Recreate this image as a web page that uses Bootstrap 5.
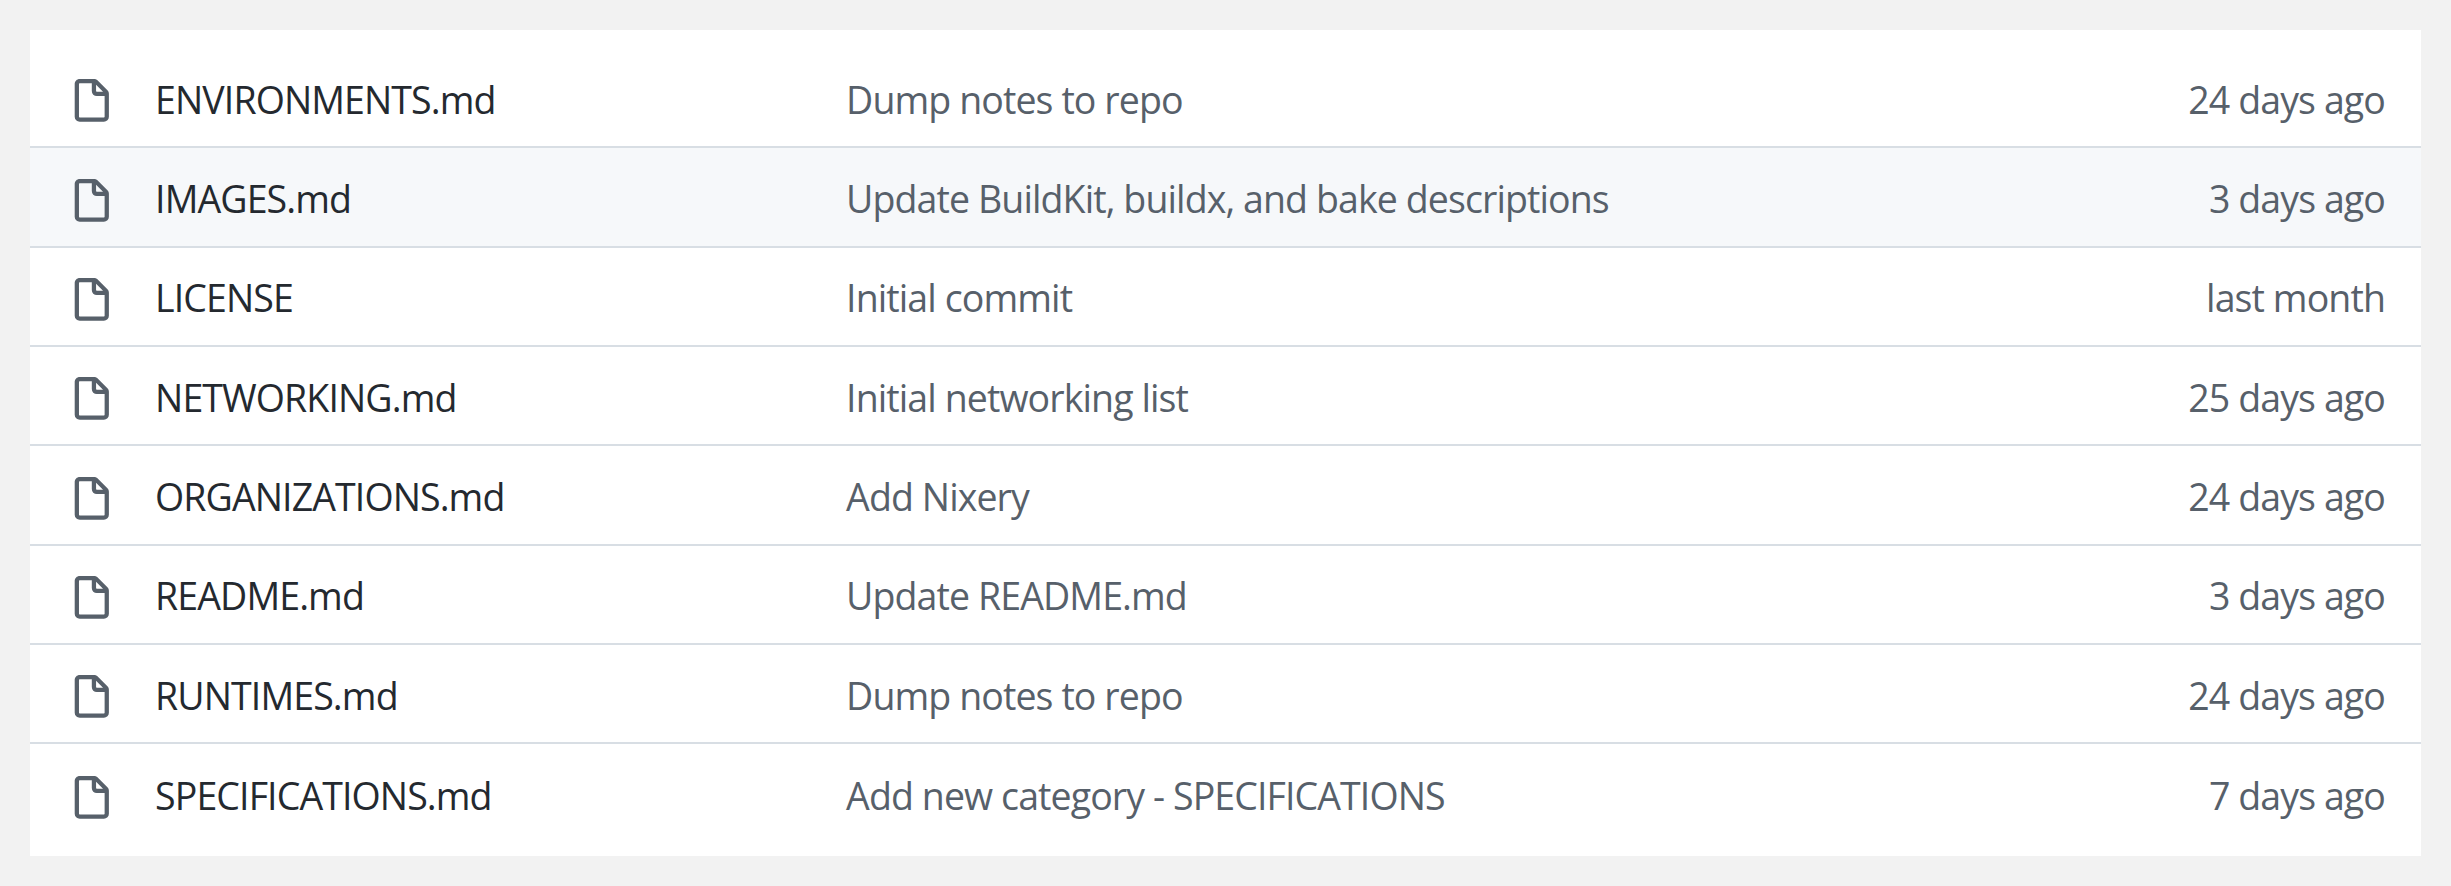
<!DOCTYPE html>
<html><head><meta charset="utf-8">
<link href="https://cdn.jsdelivr.net/npm/bootstrap@5.3.0/dist/css/bootstrap.min.css" rel="stylesheet">
<style>
html,body{height:100%}
body{background:#f2f2f2;font-family:"Open Sans","Noto Sans",sans-serif;padding:30px}
.filebox{background:#fff;padding:19px 0 12.4px}
.filerow{height:99.33px;border-bottom:2px solid #d8dee4;padding:3px 36px 0 38.5px;color:#24292f;font-size:37.5px;letter-spacing:-.9px;line-height:1.2}
.filerow:last-child{border-bottom:0}
.filerow.hov{background:#f6f8fa}
.ficon{width:45.6px;height:45.6px;color:#57606a;flex:none;margin-top:6px}
.fname{width:732px;padding-left:41px;flex:none}
.fmsg{flex:1;color:#57606a}
.fage{color:#57606a}
</style></head><body>
<div class="filebox" id="b"></div>
<script>
const d=[["ENVIRONMENTS.md","Dump notes to repo","24 days ago"],["IMAGES.md","Update BuildKit, buildx, and bake descriptions","3 days ago"],["LICENSE","Initial commit","last month"],["NETWORKING.md","Initial networking list","25 days ago"],["ORGANIZATIONS.md","Add Nixery","24 days ago"],["README.md","Update README.md","3 days ago"],["RUNTIMES.md","Dump notes to repo","24 days ago"],["SPECIFICATIONS.md","Add new category - SPECIFICATIONS","7 days ago"]];
b.innerHTML=d.map((r,i)=>`<div class="filerow d-flex align-items-center ${i==1?'hov':''}"><svg class="ficon" viewBox="0 0 16 16" fill="currentColor"><path fill-rule="evenodd" d="M3.75 1.5a.25.25 0 0 0-.25.25v11.5c0 .138.112.25.25.25h8.5a.25.25 0 0 0 .25-.25V6H9.75A1.75 1.75 0 0 1 8 4.25V1.5H3.75zm5.75.56v2.19c0 .138.112.25.25.25h2.19L9.5 2.06zM2 1.75C2 .784 2.784 0 3.75 0h5.086c.464 0 .909.184 1.237.513l3.414 3.414c.329.328.513.773.513 1.237v8.086A1.75 1.75 0 0 1 12.25 15h-8.5A1.75 1.75 0 0 1 2 13.25V1.75z"/></svg><div class="fname">${r[0]}</div><div class="fmsg">${r[1]}</div><div class="fage">${r[2]}</div></div>`).join('');
</script>
<script src="https://cdn.jsdelivr.net/npm/bootstrap@5.3.0/dist/js/bootstrap.bundle.min.js"></script>
</body></html>
